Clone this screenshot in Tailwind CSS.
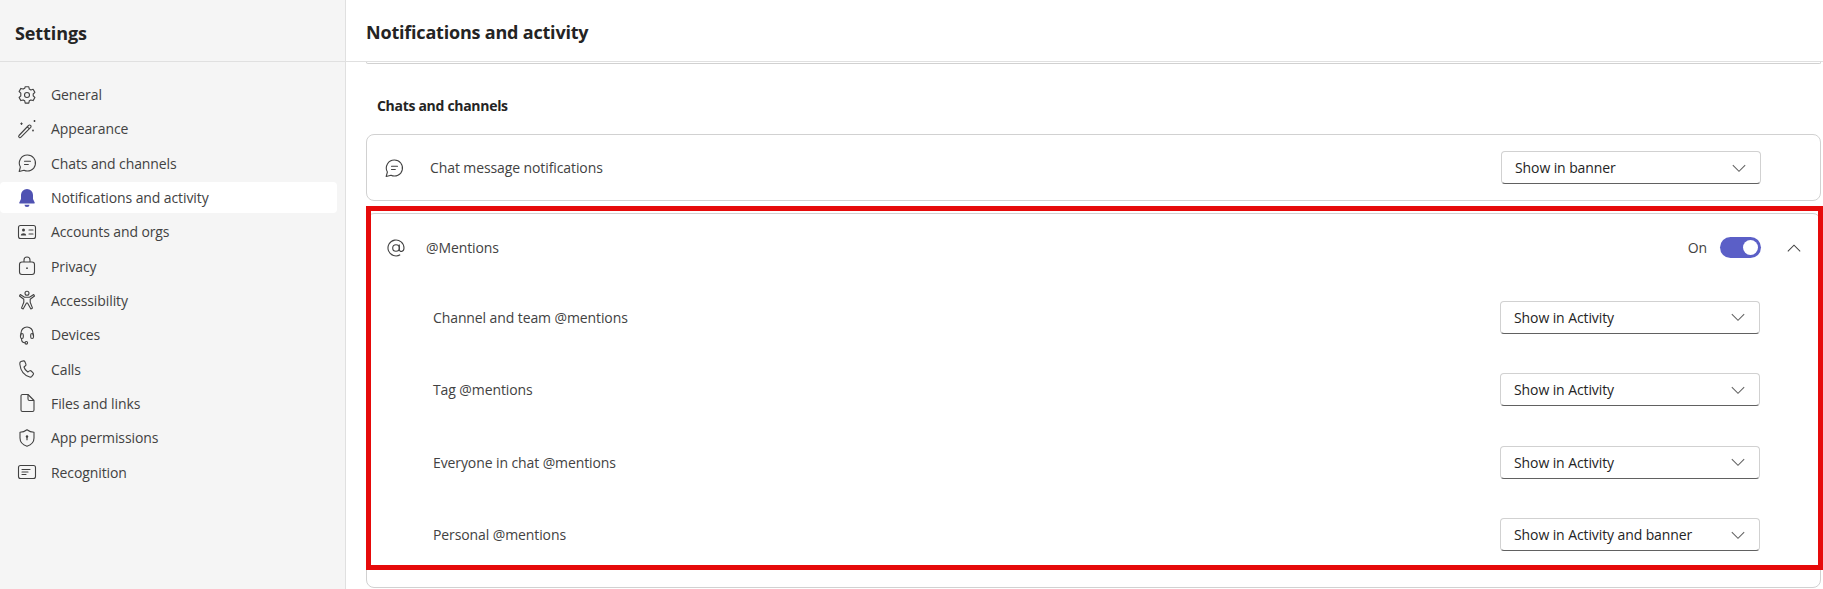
<!DOCTYPE html>
<html lang="en">
  <head>
    <meta charset="utf-8" />
    <title>Settings</title>
    <script src="https://cdn.jsdelivr.net/npm/@tailwindcss/browser@4"></script>
  </head>
  <body class="bg-white h-screen overflow-hidden font-['Open_Sans',sans-serif] text-[#424242] text-[14px] tracking-[-0.1px]">
    <div class="relative flex h-[589px] overflow-hidden">
      <!-- Sidebar -->
      <aside class="w-[346px] shrink-0 bg-[#f5f5f5] border-r border-[#e0e0e0]">
        <div class="h-[62px] border-b border-[#e0e0e0] pl-[15px] pt-[5px] flex items-center">
          <h1 class="text-[18px] font-bold text-[#242424] tracking-[-0.1px]">Settings</h1>
        </div>
        <nav class="pt-[17.1px] pr-[8px] flex flex-col gap-[3.32px]">
          <a class="h-[31px] flex items-center gap-[14px] pl-[17px]">
            <svg class="w-[20px] h-[20px]" viewBox="0 0 20 20" fill="none" stroke="#424242" stroke-width="1.1" stroke-linejoin="round"><path d="M8.2 1.8h3.6l.5 2.3 1.6.9 2.2-.7 1.8 3.1-1.7 1.6v1.9l1.7 1.6-1.8 3.1-2.2-.7-1.6.9-.5 2.3H8.2l-.5-2.3-1.6-.9-2.2.7-1.8-3.1 1.7-1.6V8.100L2.100 6.500l1.800-3.100 2.200.7 1.600-.9z"/><circle cx="10" cy="10" r="2.500"/></svg>
            <span>General</span>
          </a>
          <a class="h-[31px] flex items-center gap-[14px] pl-[17px]">
            <svg class="w-[20px] h-[20px]" viewBox="0 0 20 20" fill="none" stroke="#424242" stroke-width="1.1" stroke-linejoin="round"><path d="M2 16.500 11.500 6.500a1.400 1.400 0 0 1 2.200 1.900L4 18.200a1.300 1.300 0 0 1-2-1.700zM10.300 7.800l2.100 2"/><path d="M4.500 3.500v2.400M3.300 4.700h2.400M17.500 1v2M16.500 2h2" stroke-width="1"/><circle cx="16" cy="11.500" r=".9" fill="#424242" stroke="none"/></svg>
            <span>Appearance</span>
          </a>
          <a class="h-[31px] flex items-center gap-[14px] pl-[17px]">
            <svg class="w-[20px] h-[20px]" viewBox="0 0 20 20" fill="none" stroke="#424242" stroke-width="1.1" stroke-linecap="round" stroke-linejoin="round"><path d="M10.500 2a8 8 0 1 1-3.500 15.200L2.200 18.500l1.200-4.500A8 8 0 0 1 10.500 2z"/><path d="M7.500 8.300h6M7.500 11.500h3.800"/></svg>
            <span>Chats and channels</span>
          </a>
          <a class="h-[31px] flex items-center gap-[14px] pl-[17px] bg-white rounded-[4px]">
            <svg class="w-[20px] h-[20px]" viewBox="0 0 20 20" fill="#4f52b2"><path d="M10 1a6 6 0 0 0-6 6v4L2.300 14.600c-.2.500.1 1 .7 1h14c.6 0 .9-.5.700-1L16 11V7a6 6 0 0 0-6-6z"/><path d="M7.500 16.800h5a2.500 2.200 0 0 1-5 0z"/></svg>
            <span>Notifications and activity</span>
          </a>
          <a class="h-[31px] flex items-center gap-[14px] pl-[17px]">
            <svg class="w-[20px] h-[20px]" viewBox="0 0 20 20" fill="none" stroke="#424242" stroke-width="1.1" stroke-linecap="round"><rect x="1.500" y="3.500" width="17" height="13" rx="2"/><circle cx="6.500" cy="8" r="1.500" fill="#424242" stroke="none"/><path d="M3.800 13.400c0-3 5.400-3 5.400 0z" fill="#424242" stroke="none"/><path d="M12 8h4M12 12h4"/></svg>
            <span>Accounts and orgs</span>
          </a>
          <a class="h-[31px] flex items-center gap-[14px] pl-[17px]">
            <svg class="w-[20px] h-[20px]" viewBox="0 0 20 20" fill="none" stroke="#424242" stroke-width="1.1"><rect x="2.500" y="6" width="15" height="12.500" rx="2.500"/><path d="M7 6V4a3 3 0 0 1 6 0v2"/><circle cx="10" cy="12.200" r=".9" fill="#424242" stroke="none"/></svg>
            <span>Privacy</span>
          </a>
          <a class="h-[31px] flex items-center gap-[14px] pl-[17px]">
            <svg class="w-[20px] h-[20px]" viewBox="0 0 20 20" fill="none" stroke="#424242" stroke-width="1.1" stroke-linejoin="round"><circle cx="10" cy="3.200" r="2"/><path d="M3.300 4.500 7.500 7.200h5l4.200-2.700 .8 1.500-4.300 3.300v3l2.300 5.800-1.600.8L10.500 13h-1l-3.400 5.900-1.600-.8 2.300-5.800v-3L2.500 6z"/></svg>
            <span>Accessibility</span>
          </a>
          <a class="h-[31px] flex items-center gap-[14px] pl-[17px]">
            <svg class="w-[20px] h-[20px]" viewBox="0 0 20 20" fill="none" stroke="#424242" stroke-width="1.1" stroke-linecap="round"><path d="M4 10V8a6 6 0 0 1 12 0v2"/><rect x="3.500" y="8.500" width="2.800" height="5" rx="1.400"/><rect x="13.700" y="8.500" width="2.800" height="5" rx="1.400"/><path d="M4.500 13.500c0 2.700 1.500 4.300 3.500 4.300"/><circle cx="9.300" cy="17.800" r="1.300"/></svg>
            <span>Devices</span>
          </a>
          <a class="h-[31px] flex items-center gap-[14px] pl-[17px]">
            <svg class="w-[20px] h-[20px]" viewBox="0 0 20 20" fill="none" stroke="#424242" stroke-width="1.1" stroke-linejoin="round"><path d="M4 2.500 6.300 1.900c.7-.2 1.300.1 1.600.8l1 2.400c.2.600.1 1.200-.4 1.600L7 8c.5 1.900 2 4 3.800 5l1.700-1.100c.5-.4 1.200-.3 1.700.1l1.900 1.800c.5.500.6 1.200.1 1.800l-1.400 1.800c-.5.600-1.300.9-2 .6C7.500 16.500 3.500 11.500 2.800 5c-.1-1.200.2-2.100 1.200-2.500z"/></svg>
            <span>Calls</span>
          </a>
          <a class="h-[31px] flex items-center gap-[14px] pl-[17px]">
            <svg class="w-[20px] h-[20px]" viewBox="0 0 20 20" fill="none" stroke="#424242" stroke-width="1.1" stroke-linejoin="round"><path d="M5.500 1.500H11L17 7.500V17a1.500 1.500 0 0 1-1.500 1.500h-10A1.500 1.500 0 0 1 4 17V3a1.500 1.500 0 0 1 1.500-1.500z"/><path d="M11 1.500V6a1.500 1.500 0 0 0 1.500 1.500H17"/></svg>
            <span>Files and links</span>
          </a>
          <a class="h-[31px] flex items-center gap-[14px] pl-[17px]">
            <svg class="w-[20px] h-[20px]" viewBox="0 0 20 20" fill="none" stroke="#424242" stroke-width="1.1" stroke-linejoin="round"><path d="M10 1.800c2 1.600 4.400 2.500 7 2.500V10c0 4-2.600 6.800-7 8.200C5.600 16.800 3 14 3 10V4.300c2.600 0 5-.9 7-2.500z"/><circle cx="10" cy="8.500" r="1.200" fill="#424242" stroke="none"/><path d="M10 9v3.300" stroke-width="1.200"/></svg>
            <span>App permissions</span>
          </a>
          <a class="h-[31px] flex items-center gap-[14px] pl-[17px]">
            <svg class="w-[20px] h-[20px]" viewBox="0 0 20 20" fill="none" stroke="#424242" stroke-width="1.1" stroke-linecap="round"><rect x="1.500" y="3.500" width="17" height="13" rx="2"/><path d="M5 7.500h8M5 10h6M5 12.500h4"/></svg>
            <span>Recognition</span>
          </a>
        </nav>
      </aside>

      <!-- Main panel -->
      <main class="flex-1 min-w-0">
        <div class="h-[62px] border-b border-[#e0e0e0] pl-[20px] pt-[3px] flex items-center">
          <h2 class="text-[18px] font-bold text-[#242424] tracking-[-0.2px]">Notifications and activity</h2>
        </div>
        <div class="pl-[20px] pr-[2px]">
          <div class="h-[2px] border border-t-0 border-[#d1d1d1] rounded-b-[6px]"></div>
          <h3 class="mt-[32px] ml-[11px] h-[20px] leading-[20px] font-bold text-[#242424] tracking-[-0.3px]">Chats and channels</h3>

          <!-- Chat message notifications -->
          <div class="mt-[18px] h-[67px] border border-[#d1d1d1] rounded-[8px] flex items-center pl-[17px] pr-[59px]">
            <svg class="w-[20px] h-[20px] shrink-0" viewBox="0 0 20 20" fill="none" stroke="#424242" stroke-width="1.1" stroke-linecap="round" stroke-linejoin="round"><path d="M10.500 2a8 8 0 1 1-3.500 15.200L2.200 18.500l1.200-4.500A8 8 0 0 1 10.500 2z"/><path d="M7.500 8.300h6M7.500 11.500h3.800"/></svg>
            <span class="ml-[26px] flex-1">Chat message notifications</span>
            <div class="w-[260px] h-[33px] border border-[#d1d1d1] border-b-[#616161] rounded-[4px] flex items-center justify-between pl-[13px] pr-[12px] text-[#242424]">
              <span>Show in banner</span>
              <svg class="w-[18px] h-[18px]" viewBox="0 0 16 16" fill="none" stroke="#616161" stroke-width=".9"><path d="M2.500 5.500 8 11l5.500-5.500"/></svg>
            </div>
          </div>

          <!-- @Mentions -->
          <div class="mt-[12px] h-[375px] border border-[#d1d1d1] rounded-[8px]">
            <div class="h-[67px] flex items-center pl-[19px] pr-[17px]">
              <svg class="w-[20px] h-[20px] shrink-0" viewBox="0 0 20 20" fill="none" stroke="#424242" stroke-width="1.100"><circle cx="10" cy="10" r="3.300"/><path d="M13.300 6.500v5c0 2.800 4.700 2.800 4.700-1.500a8 8 0 1 0-3.800 6.800"/></svg>
              <span class="ml-[20px] flex-1">@Mentions</span>
              <span>On</span>
              <div class="ml-[13px] w-[41px] h-[21px] rounded-full bg-[#5b5fc7] flex items-center justify-end pr-[3px]">
                <div class="w-[15px] h-[15px] rounded-full bg-white"></div>
              </div>
              <svg class="ml-[24px] w-[18px] h-[18px]" viewBox="0 0 16 16" fill="none" stroke="#424242" stroke-width=".9"><path d="M2.500 11 8 5.500l5.500 5.500"/></svg>
            </div>
            <div class="flex flex-col gap-[39.6px] pl-[66px] pr-[60px] pt-[19.5px]">
              <div class="h-[33px] flex items-center justify-between">
                <span>Channel and team @mentions</span>
                <div class="w-[260px] h-[33px] border border-[#d1d1d1] border-b-[#616161] rounded-[4px] flex items-center justify-between pl-[13px] pr-[12px] text-[#242424]">
                  <span>Show in Activity</span>
                  <svg class="w-[18px] h-[18px]" viewBox="0 0 16 16" fill="none" stroke="#616161" stroke-width=".9"><path d="M2.500 5.500 8 11l5.500-5.500"/></svg>
                </div>
              </div>
              <div class="h-[33px] flex items-center justify-between">
                <span>Tag @mentions</span>
                <div class="w-[260px] h-[33px] border border-[#d1d1d1] border-b-[#616161] rounded-[4px] flex items-center justify-between pl-[13px] pr-[12px] text-[#242424]">
                  <span>Show in Activity</span>
                  <svg class="w-[18px] h-[18px]" viewBox="0 0 16 16" fill="none" stroke="#616161" stroke-width=".9"><path d="M2.500 5.500 8 11l5.500-5.500"/></svg>
                </div>
              </div>
              <div class="h-[33px] flex items-center justify-between">
                <span>Everyone in chat @mentions</span>
                <div class="w-[260px] h-[33px] border border-[#d1d1d1] border-b-[#616161] rounded-[4px] flex items-center justify-between pl-[13px] pr-[12px] text-[#242424]">
                  <span>Show in Activity</span>
                  <svg class="w-[18px] h-[18px]" viewBox="0 0 16 16" fill="none" stroke="#616161" stroke-width=".9"><path d="M2.500 5.500 8 11l5.500-5.500"/></svg>
                </div>
              </div>
              <div class="h-[33px] flex items-center justify-between">
                <span>Personal @mentions</span>
                <div class="w-[260px] h-[33px] border border-[#d1d1d1] border-b-[#616161] rounded-[4px] flex items-center justify-between pl-[13px] pr-[12px] text-[#242424]">
                  <span>Show in Activity and banner</span>
                  <svg class="w-[18px] h-[18px]" viewBox="0 0 16 16" fill="none" stroke="#616161" stroke-width=".9"><path d="M2.500 5.500 8 11l5.500-5.500"/></svg>
                </div>
              </div>
            </div>
          </div>
        </div>
      </main>

      <!-- Red annotation frame over the screenshot -->
      <div class="absolute left-[366px] top-[206px] w-[1457px] h-[364px] border-[5px] border-[#e60a0a] pointer-events-none"></div>
    </div>
  </body>
</html>
